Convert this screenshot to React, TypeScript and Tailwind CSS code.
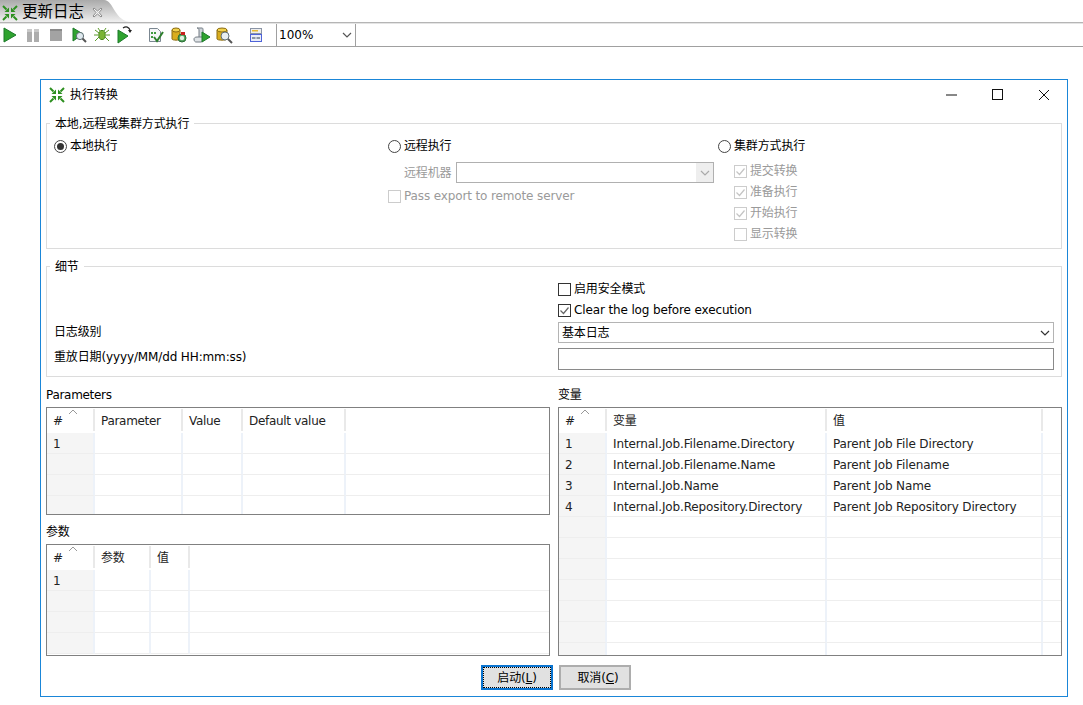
import { ReactNode } from "react";

function KettleIcon({ size = 16 }: { size?: number }) {
  const arrow = "M1 1L4.500 4.500";
  const head = "M7 7V2.500L2.500 7z";
  return (
    <svg width={size} height={size} viewBox="0 0 16 16" className="shrink-0">
      {[0, 90, 180, 270].map((deg) => (
        <g key={deg} transform={`rotate(${deg} 8 8)`}>
          <path d={arrow} stroke="#2c8f1f" strokeWidth="2" fill="none" />
          <path d={head} fill="#2c8f1f" />
        </g>
      ))}
    </svg>
  );
}

function ToolIcon({ name }: { name: string }) {
  if (name === "run")
    return (
      <svg width="16" height="16" viewBox="0 0 16 16">
        <path d="M2 1l12 7-12 7z" fill="#2fa32f" stroke="#1d7a2a" />
      </svg>
    );
  if (name === "pause")
    return (
      <svg width="16" height="16" viewBox="0 0 16 16">
        <path d="M2 2h5v13H2zM9 2h5v13H9z" fill="#adadad" />
        <path d="M2 2h5v3H2zM9 2h5v3H9z" fill="#c8c8c8" />
      </svg>
    );
  if (name === "stop")
    return (
      <svg width="16" height="16" viewBox="0 0 16 16">
        <rect x="2" y="2" width="12" height="12" fill="#a3a3a3" />
        <rect x="2" y="2" width="12" height="2" fill="#8a8a8a" />
      </svg>
    );
  if (name === "preview")
    return (
      <svg width="16" height="16" viewBox="0 0 16 16">
        <path d="M2 1l10 6-10 7z" fill="#2fa32f" stroke="#1d7a2a" />
        <circle cx="9" cy="9" r="3.600" fill="#dfe9ee" stroke="#5f6f75" />
        <path d="M11.500 11.500l3.500 3.500" stroke="#555" strokeWidth="2" />
      </svg>
    );
  if (name === "debug")
    return (
      <svg width="18" height="16" viewBox="0 0 18 16">
        <g stroke="#5c9a2a" strokeWidth="1" fill="none">
          <path d="M6 6L2 3M12 6l4-3M5 8H1M13 8h4M6 10l-4 4M12 10l4 4M7 4L5 1M11 4l2-3" />
        </g>
        <ellipse cx="9" cy="8" rx="3.200" ry="4.600" fill="#7ab534" stroke="#4a8a1e" />
      </svg>
    );
  if (name === "replay")
    return (
      <svg width="16" height="18" viewBox="0 0 16 18">
        <path d="M1 4l10 6-10 7z" fill="#2fa32f" stroke="#1d7a2a" />
        <path d="M6 2c3-2 6-1 7 2" fill="none" stroke="#222" strokeWidth="1.200" />
        <path d="M11 4h4l-2 3z" fill="#222" />
      </svg>
    );
  if (name === "check")
    return (
      <svg width="16" height="16" viewBox="0 0 16 16">
        <path d="M1.500 1.500h8l3 3v10h-11z" fill="#f4f6f8" stroke="#7b8791" />
        <path d="M3 5h2v2H3zM6 5h2v2H6zM3 9h2v2H3z" fill="#3f9a3f" />
        <path d="M6 10l3 4 6-9" fill="none" stroke="#2d7f2d" strokeWidth="2" />
      </svg>
    );
  if (name === "dbclock")
    return (
      <svg width="16" height="16" viewBox="0 0 16 16">
        <path d="M1 3v9c0 1.500 8 1.500 8 0V3z" fill="#d9ad1e" stroke="#8a6a10" />
        <ellipse cx="5" cy="3" rx="4" ry="2" fill="#f0d24d" stroke="#8a6a10" />
        <circle cx="11" cy="11" r="4" fill="#4fa05a" stroke="#2a6e33" />
        <circle cx="11" cy="11" r="2.200" fill="#dff0e0" />
        <rect x="10" y="5" width="4" height="3" fill="#c8201c" />
      </svg>
    );
  if (name === "scroll")
    return (
      <svg width="18" height="16" viewBox="0 0 18 16">
        <path d="M4 1h5c1 0 1 1 1 2v8H6V3c0-1-1-2-2-2z" fill="#cfd5da" stroke="#747d85" />
        <path d="M1 12c0-1 1-2 3-2h6v3c0 1-1 2-2 2H3c-1 0-2-1-2-3z" fill="#dfe3e6" stroke="#747d85" />
        <path d="M9 5l8 5-8 5z" fill="#2fa32f" stroke="#1d7a2a" />
      </svg>
    );
  if (name === "dbsearch")
    return (
      <svg width="17" height="17" viewBox="0 0 17 17">
        <path d="M1 3v9c0 1.500 10 1.500 10 0V3z" fill="#d9ad1e" stroke="#8a6a10" />
        <ellipse cx="6" cy="3" rx="5" ry="2" fill="#f0d24d" stroke="#8a6a10" />
        <circle cx="9" cy="9" r="4" fill="#e8eef0" stroke="#5f6f75" />
        <path d="M12 12l4 4" stroke="#555" strokeWidth="2" />
      </svg>
    );
  return (
    <svg width="16" height="16" viewBox="0 0 16 16">
      <rect x="2.500" y="1.500" width="11" height="5" fill="#eee" stroke="#8a94a5" />
      <rect x="4" y="3" width="6" height="1.500" fill="#e8b92f" />
      <rect x="2.500" y="7.500" width="11" height="7" fill="#e9edf8" stroke="#4f63d8" />
      <rect x="4" y="10" width="3.500" height="2" fill="#8a94a5" />
      <rect x="8.500" y="10" width="3.500" height="2" fill="#8a94a5" />
    </svg>
  );
}

function Chevron({ color = "#555" }: { color?: string }) {
  return (
    <svg width="10" height="6" viewBox="0 0 10 6" className="shrink-0">
      <path d="M1 1l4 4 4-4" fill="none" stroke={color} strokeWidth="1.200" />
    </svg>
  );
}

function Radio({ checked, label }: { checked?: boolean; label: string }) {
  return (
    <div className="flex h-4 items-center">
      <span className="mr-[3px] flex h-[13px] w-[13px] items-center justify-center rounded-full border border-[#444] bg-white">
        {checked && <span className="h-[7px] w-[7px] rounded-full bg-[#333]" />}
      </span>
      <span className="text-black">{label}</span>
    </div>
  );
}

function Check({ checked, disabled, label }: { checked?: boolean; disabled?: boolean; label: string }) {
  return (
    <div className="flex h-4 items-center">
      <span
        className={`mr-[3px] flex h-[13px] w-[13px] items-center justify-center border bg-white ${
          disabled ? "border-[#cccccc]" : "border-[#333]"
        }`}
      >
        {checked && (
          <svg width="11" height="11" viewBox="0 0 11 11">
            <path d="M1.500 5.500l3 3 5-6" fill="none" stroke={disabled ? "#c4c4c4" : "#666"} strokeWidth="1.200" />
          </svg>
        )}
      </span>
      <span className={disabled ? "text-[#9a9a9a]" : "text-black"}>{label}</span>
    </div>
  );
}

function Group({ title, className, children }: { title: string; className: string; children: ReactNode }) {
  return (
    <div className={`border border-[#dcdcdc] ${className}`}>
      <div className="-mt-2 ml-[3px] h-4 w-fit bg-white px-[5px] leading-4 text-black">{title}</div>
      {children}
    </div>
  );
}

function DataTable({
  columns,
  rows,
  className,
}: {
  columns: { label: string; width: number }[];
  rows: string[][];
  className: string;
}) {
  return (
    <div className={`relative flex flex-col overflow-hidden border border-[#808080] bg-white pt-px ${className}`}>
      <div className="flex h-[24px] shrink-0">
        {columns.map((col) => (
          <div
            key={col.label}
            style={{ width: col.width }}
            className="mb-0.5 shrink-0 border-r-2 border-[#e9e9e9] pl-[6px] pt-1 leading-4 tracking-[-0.3px] text-[#222]"
          >
            {col.label}
          </div>
        ))}
      </div>
      {rows.map((row, i) => (
        <div key={i} className="flex h-[21px] shrink-0">
          {columns.map((col, j) => (
            <div
              key={col.label}
              style={{ width: col.width }}
              className={`shrink-0 truncate border-b border-r-2 border-b-[#eeeeee] border-r-[#edf2f9] pl-[6px] leading-[23px] text-[#222] ${
                j === 0 ? "bg-[#f5f5f5]" : ""
              }`}
            >
              {row[j]}
            </div>
          ))}
          <div className="flex-1 border-b border-[#eeeeee]" />
        </div>
      ))}
      <svg width="10" height="6" viewBox="0 0 10 6" className="absolute left-[21px] top-px">
        <path d="M1 5l4-4 4 4" fill="none" stroke="#999" />
      </svg>
    </div>
  );
}

const paramColumns = [
  { label: "#", width: 48 },
  { label: "Parameter", width: 88 },
  { label: "Value", width: 60 },
  { label: "Default value", width: 103 },
];

const argColumns = [
  { label: "#", width: 48 },
  { label: "参数", width: 56 },
  { label: "值", width: 39 },
];

const varColumns = [
  { label: "#", width: 48 },
  { label: "变量", width: 220 },
  { label: "值", width: 216 },
];

const varRows = [
  ["1", "Internal.Job.Filename.Directory", "Parent Job File Directory"],
  ["2", "Internal.Job.Filename.Name", "Parent Job Filename"],
  ["3", "Internal.Job.Name", "Parent Job Name"],
  ["4", "Internal.Job.Repository.Directory", "Parent Job Repository Directory"],
  ...Array.from({ length: 7 }, () => ["", "", ""]),
];

const emptyRows = [["1", "", "", ""], ["", "", "", ""], ["", "", "", ""], ["", "", "", ""]];

const leftTools = ["run", "pause", "stop", "preview", "debug", "replay"];
const rightTools = ["check", "dbclock", "scroll", "dbsearch"];

export default function App() {
  return (
    <div className="h-[705px] w-[1083px] overflow-hidden bg-white font-['DejaVu_Sans','Noto_Sans_CJK_SC',sans-serif] text-[12px] tracking-[-0.13px] text-black">
      {/* 탭 */}
      <div className="flex h-[22px] items-stretch">
        <div className="flex w-[104px] items-center bg-gradient-to-b from-[#aaaaaa] to-[#f0f0f0] pl-[2px] pt-[3px]">
          <KettleIcon />
          <span className="ml-1 text-[15.5px] leading-none tracking-normal">更新日志</span>
          <svg width="11" height="11" viewBox="0 0 11 11" className="ml-2">
            <path d="M2 1l3.500 3L9 1l1 1-3 3.500 3 3.500-1 1-3.500-3L2 10 1 9l3-3.500L1 2z" fill="#f3f3f3" stroke="#8d8d8d" />
          </svg>
        </div>
        <svg width="28" height="22" viewBox="0 0 28 22">
          <defs>
            <linearGradient id="tabfade" x1="0" y1="0" x2="0" y2="1">
              <stop offset="0" stopColor="#aaaaaa" />
              <stop offset="1" stopColor="#f0f0f0" />
            </linearGradient>
          </defs>
          <path d="M0 0C10 0 10 22 28 22H0z" fill="url(#tabfade)" />
        </svg>
      </div>
      <div className="h-[2px] border-t border-[#b5b5b5] bg-[#e4e4e4]" />

      {/* 툴바 */}
      <div className="flex h-[23px] items-center border-b border-[#a0a0a0]">
        <div className="-ml-[2px] flex h-full items-center">
          {leftTools.map((t) => (
            <span key={t} className="flex w-[23px] justify-center"><ToolIcon name={t} /></span>
          ))}
          <span className="w-2" />
          {rightTools.map((t) => (
            <span key={t} className="flex w-[23px] justify-center"><ToolIcon name={t} /></span>
          ))}
          <span className="w-2" />
          <span className="flex w-[23px] justify-center"><ToolIcon name="form" /></span>
          <div className="ml-[9px] flex h-full w-[80px] items-center justify-between border-x border-[#a0a0a0] pl-[2px] pr-[3px] tracking-normal">
            100%
            <Chevron />
          </div>
        </div>
      </div>

      {/* 다이얼로그 */}
      <div className="ml-10 mt-[32px] flex h-[618px] w-[1028px] flex-col border border-[#1a86d8] px-[5px]">
        <div className="flex h-[43px] shrink-0 items-center pb-[14px] pl-[3px]">
          <KettleIcon />
          <span className="ml-[5px] tracking-normal">执行转换</span>
          <div className="ml-auto flex items-center">
            <svg width="12" height="12" viewBox="0 0 12 12"><path d="M1 6h11" stroke="#111" /></svg>
            <svg width="12" height="12" viewBox="0 0 12 12" className="ml-[35px]"><rect x=".5" y=".5" width="10" height="10" fill="none" stroke="#111" /></svg>
            <svg width="12" height="12" viewBox="0 0 12 12" className="ml-[34px] mr-3"><path d="M1 1l10 10M11 1L1 11" stroke="#111" /></svg>
          </div>
        </div>

        <Group title="本地,远程或集群方式执行" className="h-[126px] shrink-0">
          <div className="mt-[6px] grid grid-cols-[334px_330px_1fr] pl-[7px]">
            <Radio checked label="本地执行" />
            <div>
              <Radio label="远程执行" />
              <div className="mt-2 flex h-[21px] items-center pl-4 text-[#9a9a9a]">
                <span className="mr-[5px]">远程机器</span>
                <div className="flex h-full w-[258px] justify-end border border-[#b0b0b0]">
                  <span className="flex w-[17px] items-center justify-center bg-[#eeeeee]"><Chevron color="#aaa" /></span>
                </div>
              </div>
              <div className="mt-[5px]"><Check disabled label="Pass export to remote server" /></div>
            </div>
            <div>
              <Radio label="集群方式执行" />
              <div className="ml-4 mt-[9px] flex flex-col gap-[5px]">
                <Check disabled checked label="提交转换" />
                <Check disabled checked label="准备执行" />
                <Check disabled checked label="开始执行" />
                <Check disabled label="显示转换" />
              </div>
            </div>
          </div>
        </Group>

        <Group title="细节" className="mt-[17px] h-[111px] shrink-0">
          <div className="mt-[6px] grid grid-cols-[504px_496px] pl-[7px]">
            <div />
            <Check label="启用安全模式" />
            <div className="col-start-2 mt-[5px]"><Check checked label="Clear the log before execution" /></div>
            <div className="mt-1 flex items-center pb-[2px]">日志级别</div>
            <div className="mt-1 flex h-[21px] items-center justify-between border border-[#b4b4b4] bg-white px-[3px]">
              基本日志
              <Chevron color="#333" />
            </div>
            <div className="mt-[5px] flex items-center pb-1">重放日期(yyyy/MM/dd HH:mm:ss)</div>
            <div className="mt-[5px] h-[22px] border border-[#8a8a8a] bg-white" />
          </div>
        </Group>

        <div className="mt-[10px] grid shrink-0 grid-cols-[504px_504px] gap-x-2">
          <div>
            <div className="flex h-5 items-start leading-4 tracking-[-0.3px]">Parameters</div>
            <DataTable columns={paramColumns} rows={emptyRows} className="h-[108px]" />
            <div className="mt-[9px] flex h-5 items-start leading-4">参数</div>
            <DataTable columns={argColumns} rows={emptyRows} className="h-[112px]" />
          </div>
          <div>
            <div className="flex h-5 items-start leading-4">变量</div>
            <DataTable columns={varColumns} rows={varRows} className="h-[249px]" />
          </div>
        </div>

        <div className="mt-[9px] flex justify-center gap-[6px] pl-1">
          <button className="flex h-[25px] w-[72px] items-center justify-center border-2 border-[#0a74d0] bg-[#e1e1e1] outline-1 -outline-offset-3 outline-dotted outline-black">启动(<span className="underline">L</span>)</button>
          <button className="flex h-[25px] w-[72px] items-center justify-center border-2 border-[#adadad] bg-[#e1e1e1] pl-[6px]">取消(<span className="underline">C</span>)</button>
        </div>
      </div>
    </div>
  );
}
